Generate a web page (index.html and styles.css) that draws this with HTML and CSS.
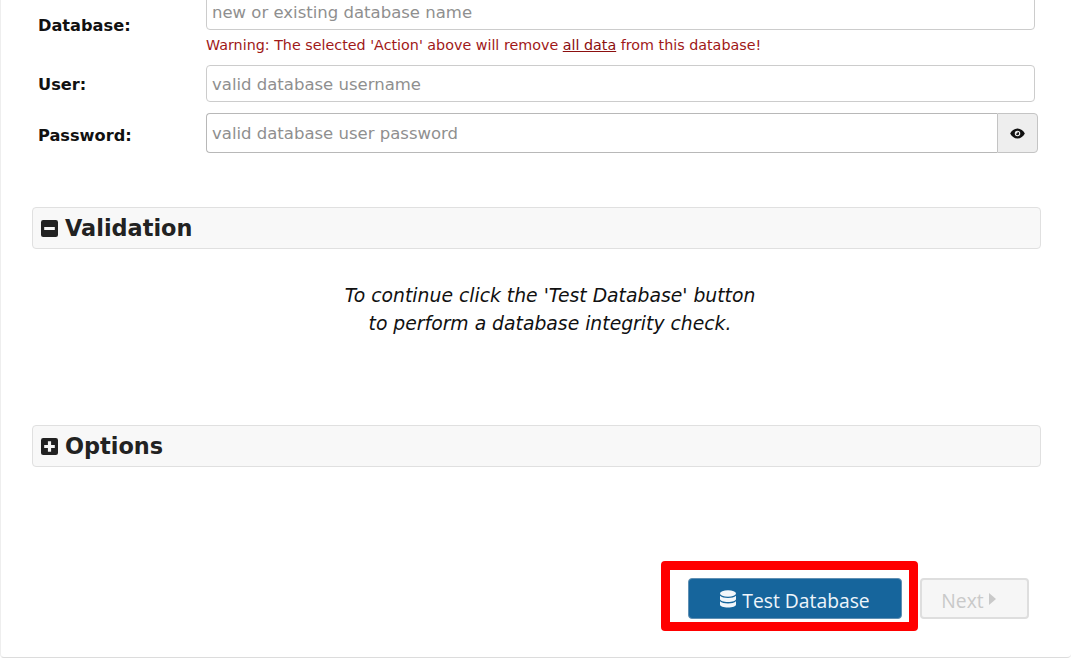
FILE: index.html
```html
<!DOCTYPE html>
<html lang="en">
<head>
<meta charset="utf-8">
<title>Database setup</title>
<link rel="stylesheet" href="styles.css">
</head>
<body>
<main class="panel">
  <form class="form">
    <div class="row row-db">
      <label class="label label-db">Database:</label>
      <div class="field">
        <input class="input input-db" placeholder="new or existing database name">
        <div class="warning">Warning: The selected 'Action' above will remove <u>all data</u> from this database!</div>
      </div>
    </div>
    <div class="row row-user">
      <label class="label label-user">User:</label>
      <input class="input input-user" placeholder="valid database username">
    </div>
    <div class="row row-pass">
      <label class="label label-pass">Password:</label>
      <div class="group">
        <input class="input input-pass" placeholder="valid database user password">
        <span class="addon">
          <svg class="eye" viewBox="0 0 16 12" width="15" height="11"><path fill="#111" fill-rule="evenodd" d="M8 .5C4.500.5 1.500 2.800 0 6c1.500 3.200 4.500 5.500 8 5.500s6.500-2.300 8-5.500C14.500 2.800 11.500.5 8 .5zM8 3a3 3 0 1 1 0 6 3 3 0 0 1 0-6z"/><path fill="#111" d="M8 4.200a1.800 1.800 0 1 1-1.800 1.800c.6.300 1.300.2 1.600-.3.300-.4.300-1 .2-1.500z"/></svg>
        </span>
      </div>
    </div>
  </form>

  <h2 class="section section-validation">
    <svg class="sq" viewBox="0 0 16 16" width="17" height="17"><path fill="#222" fill-rule="evenodd" d="M2 0h12a2 2 0 0 1 2 2v12a2 2 0 0 1-2 2H2a2 2 0 0 1-2-2V2a2 2 0 0 1 2-2zM3 6.500v3h10v-3z"/></svg>
    Validation
  </h2>
  <p class="hint">To continue click the 'Test Database' button<br>to perform a database integrity check.</p>

  <h2 class="section section-options">
    <svg class="sq" viewBox="0 0 16 16" width="17" height="17"><path fill="#222" fill-rule="evenodd" d="M2 0h12a2 2 0 0 1 2 2v12a2 2 0 0 1-2 2H2a2 2 0 0 1-2-2V2a2 2 0 0 1 2-2zM6.500 3v3.500H3v3h3.500V13h3V9.500H13v-3H9.500V3z"/></svg>
    Options
  </h2>

  <div class="actions">
    <button type="button" class="btn btn-primary">
      <svg class="db" viewBox="0 0 16 18" width="16" height="18"><ellipse cx="8" cy="3.500" rx="8" ry="3.200" fill="#f2f6fa"/><path fill="#f2f6fa" d="M0 5.800C1.500 7.500 4.500 8 8 8s6.500-.5 8-2.200V9c0 1.800-3.600 3-8 3S0 10.800 0 9z"/><path fill="#f2f6fa" d="M0 11.300C1.500 13 4.500 13.500 8 13.500s6.500-.5 8-2.200v3.200c0 1.800-3.600 3-8 3s-8-1.200-8-3z"/></svg>
      <span class="btn-text">Test Database</span>
    </button>
    <button type="button" class="btn btn-next"><span class="btn-text">Next</span> <svg class="caret" viewBox="0 0 7 12" width="7" height="12"><path fill="#c9c9c9" d="M0 0l7 6-7 6z"/></svg></button>
    <div class="highlight"></div>
  </div>
</main>
</body>
</html>
```

FILE: styles.css
```css
* { box-sizing: border-box; }
html, body { margin: 0; height: 658px; overflow: hidden; background: #fff; }
body { font-family: "DejaVu Sans", Verdana, sans-serif; color: #000; }

.panel {
  height: 658px;
  border-left: 1px solid #eee;
  border-bottom: 1px solid #dcdcdc;
  border-radius: 0 0 4px 4px;
  padding: 0 29px 0 31px;
  overflow: hidden;
}

.form { margin-top: -7px; padding-left: 6px; }
.row { display: flex; align-items: flex-start; }
.label { width: 168px; flex: none; font-weight: bold; font-size: 16.200px; color: #111; }
.label-db { padding-top: 23px; }
.label-user { padding-top: 2px; }
.label-pass { padding-top: 5px; }
.field { flex: none; width: 829px; }

.input {
  display: block;
  width: 829px;
  font: 16.500px "DejaVu Sans", Verdana, sans-serif;
  padding: 0 5px;
  background: #fff;
  border: 1px solid #ccc;
  border-radius: 4px;
  outline: none;
}
.input::placeholder { color: #8f8f8f; opacity: 1; }
.input-db { height: 37px; padding-top: 2px; }
.warning { margin-top: 7px; font-size: 14.300px; line-height: 16px; color: #a01818; }
.warning u { color: #8c0f0f; }

.row-user { margin-top: 12px; align-items: center; }
.row-pass { margin-top: 11px; align-items: center; }
.input-user { height: 37px; padding-top: 1px; }

.group { display: flex; width: 832px; height: 40px; flex: none; }
.input-pass {
  flex: 1;
  width: auto;
  height: 40px;
  border-color: #b8b8b8;
  border-right: none;
  border-radius: 4px 0 0 4px;
}
.addon {
  flex: none;
  width: 41px;
  display: flex;
  align-items: center;
  justify-content: center;
  background: #eee;
  border: 1px solid #c4c4c4;
  border-radius: 0 4px 4px 0;
}

.section {
  display: flex;
  align-items: center;
  gap: 7px;
  margin: 0;
  width: 1009px;
  height: 42px;
  padding-left: 8px;
  background: #f8f8f8;
  border: 1px solid #e0e0e0;
  border-radius: 4px;
  font-size: 22.400px;
  font-weight: bold;
  color: #222;
}
.section-validation { margin-top: 54px; }
.section-options { margin-top: 43px; }

.hint {
  width: 1036px;
  height: 100px;
  margin: 33px 0 0;
  text-align: center;
  font-size: 18.800px;
  font-style: italic;
  line-height: 28px;
  color: #111;
}

.actions {
  position: relative;
  display: flex;
  justify-content: flex-end;
  gap: 18px;
  width: 997px;
  margin-top: 111px;
}
.btn {
  height: 41px;
  font: 19.300px "Open Sans", "DejaVu Sans", sans-serif;
  border-radius: 4px;
  display: inline-flex;
  align-items: center;
  justify-content: center;
}
.btn-text { position: relative; top: 2px; }
.btn-primary {
  width: 214px;
  gap: 6px;
  background: #16659c;
  border: 1px solid #5f8fb3;
  color: #eef5fb;
}
.btn-next {
  width: 109px;
  gap: 5px;
  padding-right: 18px;
  background: #f6f6f6;
  border: 2px solid #dedede;
  color: #c9c9c9;
}
.highlight {
  position: absolute;
  left: 629px;
  top: -17px;
  width: 257px;
  height: 70px;
  border: 9px solid #f00;
  border-radius: 4px;
  pointer-events: none;
}
```
